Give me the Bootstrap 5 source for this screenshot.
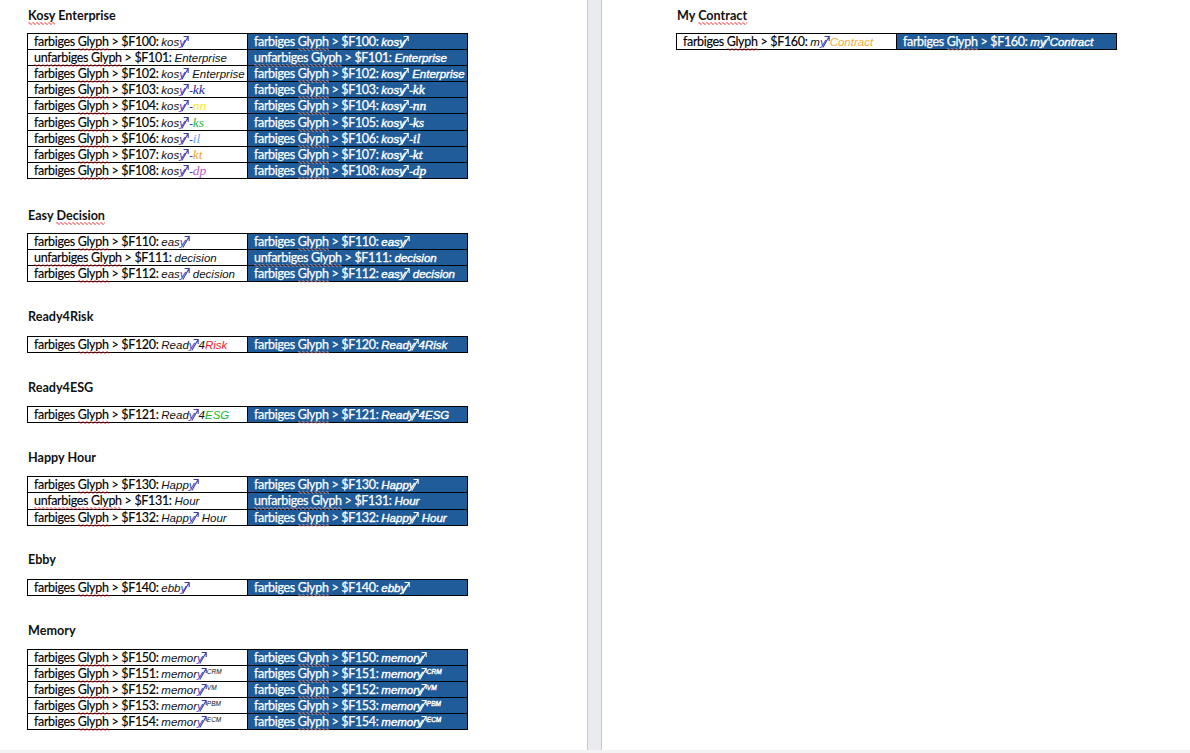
<!DOCTYPE html>
<html lang="de">
<head>
<meta charset="utf-8">
<title>Glyphen</title>
<link href="https://cdn.jsdelivr.net/npm/bootstrap@5.3.0/dist/css/bootstrap.min.css" rel="stylesheet">
<style>
html,body{height:100%;margin:0;overflow:hidden;background:#fff}
.shell{height:753px;background:#f3f3f3}
.panes{height:750px}
.sheet{background:#fff;font-family:"Lato",sans-serif;color:#000}
.sheet-left{width:587px;padding:7px 0 0 28px}
.sheet-right{padding:7px 0 0 75px}
.gutter{width:15px;background:#e9ebef;border-left:1px solid #c4c6c9;border-right:1px solid #c4c6c9}
.ttl{font-size:12.6px;font-weight:700;line-height:16px;padding-top:1px;margin:0 0 9px;color:#111}
.sect{margin-top:26px}
.sect-tight{margin-top:28px}
.sect-snug{margin-top:25px}
.gap-wide .ttl{margin-bottom:11px}
.gap-mid .ttl{margin-bottom:10px}
.sq{padding-bottom:2px;background:url("data:image/svg+xml,%3Csvg xmlns='http://www.w3.org/2000/svg' width='4' height='3'%3E%3Cpath d='M0 1.5 1 .5 3 2.5 4 1.5' fill='none' stroke='%23e0202a'/%3E%3C/svg%3E") repeat-x 0 100%}
.inv .sq{background-image:url("data:image/svg+xml,%3Csvg xmlns='http://www.w3.org/2000/svg' width='4' height='3'%3E%3Cpath d='M0 1.5 1 .5 3 2.5 4 1.5' fill='none' stroke='%23e8a4ad'/%3E%3C/svg%3E")}
.glt{border-collapse:collapse;table-layout:fixed;width:440px;margin-left:-1px;font-size:12.5px;letter-spacing:-.33px;-webkit-text-stroke:.15px}
.glt td{width:220px;height:16.1px;padding:1px 0 0 6px;border:1px solid #000;line-height:14px;white-space:nowrap;vertical-align:middle}
.glt td.inv{background:#1f5c99;color:#fff;-webkit-text-stroke:.25px}
.brand{font-family:"Liberation Sans",Arial,sans-serif;font-style:italic;font-size:11.5px;letter-spacing:0;color:#111;-webkit-text-stroke:0}
.inv .brand{color:#fff;-webkit-text-stroke:.4px}
.gy{color:#3b3bb0}
.inv .gy{color:#fff}
.mk{display:inline-block;width:8px;height:13px;vertical-align:-2px;margin:-4px 0 0 -4px;color:#3b3bb0}
.inv .mk{color:#fff}
.sup{font-size:6.5px;vertical-align:4px;line-height:0}
.cs{font-family:"Liberation Serif",serif;font-size:13.5px}
.dash{color:#3b3bb0}
.inv .dash{color:#fff}
.c-kk{color:#1c1c9c}.c-nn{color:#f2ea2b}.c-ks{color:#21b53a}.c-il{color:#6aa5ef}.c-kt{color:#f5a623}.c-dp{color:#b65cc8}
.c-risk{color:#ef1c2c;font-family:"Liberation Sans",sans-serif;font-size:11.5px}
.c-esg{color:#18b82c;font-family:"Liberation Sans",sans-serif;font-size:11.5px}
.c-con{color:#f5ab35;font-family:"Liberation Sans",sans-serif;font-size:11.5px}
.inv .cs{color:#fff}
</style>
</head>
<body>
<svg width="0" height="0" class="d-none"><symbol id="gm" viewBox="0 0 8 13"><path d="M.8 12.5 6.7 2.2M2.6 1.5H7.2V6" fill="none" stroke="currentColor" stroke-width="1.1"/></symbol></svg>
<div class="shell">
<div class="panes d-flex">
<main class="sheet sheet-left">
<section>
<h2 class="ttl"><span class="sq">Kosy</span> Enterprise</h2>
<table class="glt"><tbody id="t1"></tbody></table>
</section>
<section class="sect-tight">
<h2 class="ttl">Easy <span class="sq">Decision</span></h2>
<table class="glt"><tbody id="t2"></tbody></table>
</section>
<section class="sect gap-wide">
<h2 class="ttl">Ready4Risk</h2>
<table class="glt"><tbody id="t3"></tbody></table>
</section>
<section class="sect gap-mid">
<h2 class="ttl">Ready4ESG</h2>
<table class="glt"><tbody id="t4"></tbody></table>
</section>
<section class="sect gap-mid">
<h2 class="ttl">Happy Hour</h2>
<table class="glt"><tbody id="t5"></tbody></table>
</section>
<section class="sect-snug gap-wide">
<h2 class="ttl">Ebby</h2>
<table class="glt"><tbody id="t6"></tbody></table>
</section>
<section class="sect gap-mid">
<h2 class="ttl">Memory</h2>
<table class="glt"><tbody id="t7"></tbody></table>
</section>
</main>
<div class="gutter"></div>
<aside class="sheet sheet-right flex-grow-1">
<h2 class="ttl">My <span class="sq">Contract</span></h2>
<table class="glt"><tbody id="t8"></tbody></table>
</aside>
</div>
</div>
<script>
const M='<span class="gy">y</span><svg class="mk"><use href="#gm"/></svg>';
const D='<span class="dash">-</span>';
const s=(c,t)=>'<span class="cs '+c+'">'+t+'</span>';
const sets={
t1:[['f','F100','kos'+M],['u','F101','Enterprise'],['f','F102','kos'+M+' Enterprise'],['f','F103','kos'+M+D+s('c-kk','kk')],['f','F104','kos'+M+D+s('c-nn','nn')],['f','F105','kos'+M+D+s('c-ks','ks')],['f','F106','kos'+M+D+s('c-il','il')],['f','F107','kos'+M+D+s('c-kt','kt')],['f','F108','kos'+M+D+s('c-dp','dp')]],
t2:[['f','F110','eas'+M],['u','F111','decision'],['f','F112','eas'+M+' decision']],
t3:[['f','F120','Read'+M+'4'+s('c-risk','Risk')]],
t4:[['f','F121','Read'+M+'4'+s('c-esg','ESG')]],
t5:[['f','F130','Happ'+M],['u','F131','Hour'],['f','F132','Happ'+M+' Hour']],
t6:[['f','F140','ebb'+M]],
t7:[['f','F150','memor'+M],['f','F151','memor'+M+'<span class="sup">CRM</span>'],['f','F152','memor'+M+'<span class="sup">VM</span>'],['f','F153','memor'+M+'<span class="sup">PBM</span>'],['f','F154','memor'+M+'<span class="sup">ECM</span>']],
t8:[['f','F160','m'+M+s('c-con','Contract')]]
};
for(const id in sets){
 document.getElementById(id).innerHTML=sets[id].map(r=>{
  const lab=r[0]=='f'?'farbiges <span class="sq">Glyph</span>':'<span class="sq">unfarbiges Glyph</span>';
  const c=lab+' &gt; $'+r[1]+': <span class="brand">'+r[2]+'</span>';
  return '<tr><td>'+c+'</td><td class="inv">'+c+'</td></tr>';
 }).join('');
}
</script>
<script src="https://cdn.jsdelivr.net/npm/bootstrap@5.3.0/dist/js/bootstrap.bundle.min.js"></script>
</body>
</html>
